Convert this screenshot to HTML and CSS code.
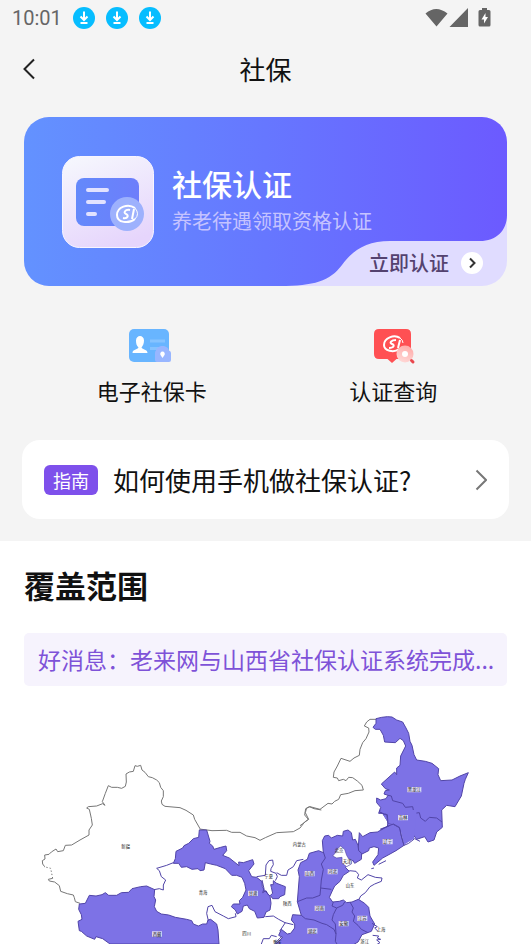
FILE: index.html
```html
<!DOCTYPE html>
<html lang="zh-CN">
<head>
    <meta charset="UTF-8">
    <meta name="viewport" content="width=device-width, initial-scale=1.0">
    <title>社保</title>
    <link rel="stylesheet" href="styles.css">
</head>
<body>
    <div class="status-bar">
        <span class="time">10:01</span>
        <svg class="download" viewBox="0 0 22 22"><circle cx="11" cy="11" r="11"/><path d="M11 4.5v8M7.5 9.5l3.500 3.500 3.500-3.500M7.500 16h7"/></svg>
        <svg class="download" viewBox="0 0 22 22"><circle cx="11" cy="11" r="11"/><path d="M11 4.5v8M7.5 9.5l3.500 3.500 3.500-3.500M7.500 16h7"/></svg>
        <svg class="download" viewBox="0 0 22 22"><circle cx="11" cy="11" r="11"/><path d="M11 4.5v8M7.5 9.5l3.500 3.500 3.500-3.500M7.500 16h7"/></svg>
        <svg class="signals" viewBox="0 0 66 20" width="66" height="20">
            <path d="M0.500 5.500Q11 -3.500 22.500 5.500L11.500 18.500ZM43 0V19H24.500ZM54 2h3V0h5v2h2q1.500 0 1.500 1.500v13.500q0 1.500-1.500 1.500H55q-1.500 0-1.500-1.500V3.500Q53.500 2 55 2Z"/>
            <path class="bolt" d="M60.500 5l-4 6.500h2.500v4l4-6.500h-2.500z"/>
        </svg>
    </div>

    <header class="header">
        <button class="back" aria-label="返回">
            <svg viewBox="0 0 12 22" width="12" height="22"><path d="M11 1.500L1.500 11l9.500 9.500"/></svg>
        </button>
        <h1>社保</h1>
    </header>

    <main>
        <a class="card" href="#">
            <svg class="card-bg" viewBox="0 0 483 169" preserveAspectRatio="none">
                <defs>
                    <linearGradient id="cardFill">
                        <stop offset="0" stop-color="#6392ff"/>
                        <stop offset="0.5" stop-color="#6677ff"/>
                        <stop offset="1" stop-color="#6c5aff"/>
                    </linearGradient>
                </defs>
                <path fill="url(#cardFill)" d="M0 0H483V98C483 114 472 124 456 124H366C342 124 328 134 318 148C306 164 290 169 256 169H0Z"/>
            </svg>
            <svg class="card-icon" viewBox="0 0 92 92">
                <defs>
                    <linearGradient id="tile" x1="0.2" y1="0" x2="0.6" y2="1">
                        <stop offset="0" stop-color="#f5f6fd"/>
                        <stop offset="1" stop-color="#e6d5fc"/>
                    </linearGradient>
                    <linearGradient id="sheet" x1="0" x2="1">
                        <stop offset="0" stop-color="#6489fb"/>
                        <stop offset="1" stop-color="#6d7efb"/>
                    </linearGradient>
                </defs>
                <rect x="0.500" y="0.500" width="91" height="91" rx="17" fill="url(#tile)" stroke="#f8f5ff"/>
                <rect x="14" y="22" width="63" height="48" rx="8" fill="url(#sheet)"/>
                <path d="M26 34h19M26 46h16M26 58h7" stroke="#e2e2ff" stroke-width="4" stroke-linecap="round"/>
                <circle cx="65" cy="58" r="17" fill="#9db1fd"/>
                <g class="logo" transform="translate(65 58)">
                    <path d="M8 -6C1 -11 -10 -7 -10 1C-10 9 2 10 8 5"/>
                    <path d="M3 -4C-2 -5 -4 -1 -1 0C2 1 1 5 -4 4M7 -5L5 5"/>
                    <path class="thin" d="M8 -6Q13 0 8 5"/>
                </g>
            </svg>
            <span class="card-text">
                <strong>社保认证</strong>
                <small>养老待遇领取资格认证</small>
            </span>
            <span class="card-action">立即认证
                <svg viewBox="0 0 22 22" width="22" height="22"><circle cx="11" cy="11" r="11"/><path d="M9 6.500l4.500 4.500L9 15.500"/></svg>
            </span>
        </a>

        <nav class="shortcuts">
            <a href="#">
                <svg viewBox="2 0 60 50" width="60" height="50">
                    <rect x="9" y="9" width="40" height="33" rx="5" fill="#68b5ff"/>
                    <path d="M30 21h15M30 28.500h9" stroke="#86c3ff" stroke-width="3"/>
                    <path fill="#fff" d="M12.500 33c0-4 5-3 6-5.500-2-2-2.500-4-2.500-7 0-6 8-6 8 0 0 3-1 5-2.500 7 1 2.500 6 1.500 6 5.500z"/>
                    <path fill="#98b6ff" d="M36 30.500C37 24.500 48 24.500 49 30.500Q51 31 51 33V40Q51 42 49 42H37Q35 42 35 40V33Q35 31 36 30.500Z"/>
                    <path fill="#fff" d="M42.500 38l-2-3a2.300 2.300 0 1 1 4 0z"/>
                </svg>
                电子社保卡
            </a>
            <a href="#">
                <svg viewBox="-2 0 60 50" width="60" height="50">
                    <defs>
                        <linearGradient id="lens" x1="0.7" y1="0" x2="0.3" y2="1">
                            <stop offset="0" stop-color="#ffaaa8"/>
                            <stop offset="1" stop-color="#ffd9d7"/>
                        </linearGradient>
                    </defs>
                    <path fill="#ff5053" d="M14 9H41Q46 9 46 14V34Q46 39 41 39H31.500L27 43L22.500 39H14Q9 39 9 34V14Q9 9 14 9Z"/>
                    <g class="logo" transform="translate(28 24)">
                        <path d="M7 -6C1 -10 -9 -6 -9 1C-9 7 1 9 6 5"/>
                        <path d="M3 -4C-2 -4 -4 -1 -1 0C2 1 1 4 -4 4M7 -4L5 4"/>
                        <path class="thin" d="M7 -6Q10 -4 10 -1"/>
                    </g>
                    <circle cx="40" cy="34" r="8.500" fill="url(#lens)"/>
                    <circle cx="40" cy="34" r="3" fill="#fff"/>
                    <path d="M46.500 40.500l1.500 1.500" stroke="#e9474d" stroke-width="3" stroke-linecap="round"/>
                </svg>
                认证查询
            </a>
        </nav>

        <a class="guide" href="#">
            <span class="tag">指南</span>
            <span class="guide-title">如何使用手机做社保认证?</span>
            <svg viewBox="0 0 12 22" width="12" height="22"><path d="M1.500 1.500L11 11l-9.500 9.500"/></svg>
        </a>
    </main>

    <section class="coverage">
        <h2>覆盖范围</h2>
        <p class="news">好消息：老来网与山西省社保认证系统完成...</p>

        <svg class="map" viewBox="12 24 1449 708">
            <!-- west -->
            <path class="border" d="M180 610L166 605L163 593L160 585L142 581L122 574L118 557L104 546L88 543L85 538L98 535"/>
            <path class="border dotted" d="M98 535L92 505L72 500"/>
            <path class="border" d="M74 500L68 492L67 482L75 477L74 465L87 463L94 456L108 447L113 455L130 452L136 436L155 435L180 420L207 405L207 390L217 375L214 355L208 328L200 324L205 320L230 318L248 311L255 316L247 305L256 280L265 257L275 262L292 262L305 265L316 259L319 246L318 222L328 216L340 214L345 197L352 199L362 196L366 210L375 217L385 230L397 233L410 240L418 248L422 262L430 272L430 290L424 303L426 313L435 319L480 323L498 331L520 345L524 358L540 386"/>
            <path class="area" d="M178 612L196 610L208 586L228 588L246 584L256 578L266 586L290 586L304 578L326 577L336 566L362 560L380 558L404 569L402 590L407 600L403 620L410 634L424 642L446 645L466 652L500 658L515 662L520 672L535 678L548 672L560 672L564 660L572 658L590 672L594 690L597 732H270L248 716L228 710L224 718L200 708L184 694L178 692L174 664L186 658L184 644L176 628Z"/>
            <path class="line" d="M402 569L418 566L430 570L430 555L437 540L424 530L418 512L410 505L440 496L460 488"/>

            <g transform="translate(420 240)">
                <path class="border" d="M118 147L156 152L200 151L215 157L240 157L260 168L285 173L300 181L316 173L350 158L400 155L420 144L434 126L446 118L436 98L440 84L448 80L462 86L484 90"/>
                <path class="area" d="M40 250L46 236L48 214L68 204L72 197L86 190L100 176L116 172L118 150L140 150L150 184L148 190L158 198L162 208L182 202L198 198L200 212L188 226L208 234L237 257L236 246L250 248L278 239L282 252L266 272L275 290L290 292L306 305L307 320L314 332L330 348L333 370L330 390L318 396L312 412L292 414L284 394L268 386L262 375L250 378L246 394L232 402L226 390L214 380L220 372L240 372L238 362L248 352L258 330L254 310L246 292L230 286L215 286L196 266L170 256L152 252L136 248L132 270L120 272L114 266L96 268L80 260L64 262L56 250Z"/>
                <path class="area" d="M340 302L350 310L376 320L374 344L360 350L356 356L338 356L331 346L338 340L334 322L332 314L340 314Z"/>
                <path class="line" d="M290 290L316 286L318 255L327 242L338 240L340 254L333 266L332 274L348 280L352 290L346 302M306 300L312 326L308 338L318 332L326 346M350 278L364 286L380 286L384 270L400 260L410 242L430 238"/>
                <path class="line" d="M316 410L340 408L356 418L375 428L400 434M376 428L360 452L370 466L358 476L344 492M350 470L334 466L328 476L310 476L304 492M145 422L140 400L144 380L156 376L165 395L190 408L205 416L228 410L226 400"/>
            </g>

            <g transform="translate(840 0)">
                <path class="border" d="M228 58L210 58L200 66L193 78L206 84L207 96L198 116L188 128L180 148L178 166L162 174L150 184L138 180L123 175L112 198L102 216L100 232L112 234L116 242L130 238L138 242L146 232L158 233L172 243L186 256L190 270L165 272L145 280L122 284L116 298L104 304L96 312L84 310L60 328L30 320L17 326L14 345L25 358L10 370L0 377"/>
                <path class="area" d="M228 56L245 52L262 50L276 51L290 60L308 66L318 84L326 100L330 124L336 136L342 164L350 180L376 184L396 190L416 206L414 224L422 242L456 240L480 228L505 218L496 238L492 250L484 288L465 320L440 316L425 330L427 382L410 396L402 420L384 426L374 410L350 418L330 392H252L244 388L262 380L264 366L248 340L236 340L242 322L230 308L230 294L242 300L258 296L264 286L252 282L256 272L268 270L256 266L244 252L284 216L290 224L290 204L300 196L302 168L317 138L310 122L300 115L286 128L254 126L250 106L240 88L226 88L219 82L228 70Z"/>
                <path class="line" d="M264 286L274 288L278 302L308 310L316 322L338 320L342 340L358 338L362 354L376 364L388 352L410 354L426 366"/>
            </g>

            <g transform="translate(810 330)">
                <!-- north east coast -->
                <path class="area" d="M270 0L268 6L282 12L290 12L294 40L308 42L330 54L334 78L342 106L318 122L300 132L278 144L252 166L248 156L264 134L266 114L252 110L238 114L236 122L212 134L204 124L208 68L218 80L240 68L262 66L284 54L300 46"/>
                <path d="M272 0H380L372 86L342 104L330 54L308 42L294 40L290 12Z" fill="#7d72e6"/>
                <path class="line" d="M270 58L300 46L310 42L328 52L334 78L342 106L356 100L374 86L390 94M270 6L284 14L292 14L294 40"/>
                <path class="line" d="M244 176L252 174M266 163L288 152"/>
                <!-- centre -->
                <path class="area" d="M97 92L104 78L116 76L124 84L142 76L158 78L160 64L174 60L184 68L188 90L196 88L204 106L206 122L215 130L214 148L194 160L188 150L178 162L166 172L178 184L160 196L150 214L134 228L128 240L118 262L128 276L148 274L160 270L170 278L186 276L205 268L224 280L236 292L240 318L254 342L244 364L216 374L204 396L190 404H-44L-22 382L-34 376L-26 358L-8 372L2 370L14 354L14 342L4 330L8 314L34 316L22 275L28 200L24 180L32 158L52 148L58 130L86 122L100 128Z"/>
                <path class="hole" d="M128 138L138 126L140 118L152 108L164 118L170 136L176 146L186 150L184 162L170 170L156 160L156 142L140 144Z"/>
                <path class="line" d="M100 126L106 144L94 162L100 178L94 210L92 234L124 238M92 234L90 256L68 264L50 264L22 275M34 316L46 326L72 330L96 340L110 344L132 358L138 372M130 276L126 288L140 294L130 314L126 330L136 342L138 372L136 394L142 404M140 294L158 286L164 276M180 276L190 294L186 306L194 318L190 334L204 346L214 358L234 368"/>
                <path class="line" d="M178 182L198 184L206 194L202 204L214 210L234 194L256 202L276 204L274 214L254 222L240 230L226 248L212 258L206 270"/>
                <path class="line" d="M246 340L262 350L254 354L264 364M248 376L266 378L262 384L272 388L260 390L270 398L262 402"/>
            </g>

            <g class="labels">
                <text x="317" y="445">新疆</text>
                <text x="549" y="582">青海</text>
                <text x="838" y="438">内蒙古</text>
                <text x="746" y="534">宁夏</text>
                <text x="802" y="616">陕西</text>
                <text x="680" y="706">四川</text>
                <text x="772" y="731">重庆</text>
                <text x="990" y="562">山东</text>
                <text x="957" y="456">北京</text>
                <text x="981" y="490">天津</text>
                <text x="1083" y="692">上海</text>
                <text x="1034" y="730">浙江</text>
            </g>
            <g class="labels boxed">
                <path d="M396 694h30v16h-30zM684 572h30v16h-30zM1162 261h42v16h-42zM1134 345h30v16h-30zM1088 417h30v16h-30zM854 513h30v16h-30zM923 507h30v16h-30zM884 617h30v16h-30zM862 685h30v16h-30zM956 663h30v16h-30zM1012 647h30v16h-30z"/>
                <text x="411" y="707">西藏</text>
                <text x="699" y="585">甘肃</text>
                <text x="1183" y="274">黑龙江</text>
                <text x="1149" y="358">吉林</text>
                <text x="1103" y="430">辽宁</text>
                <text x="869" y="526">山西</text>
                <text x="938" y="520">河北</text>
                <text x="899" y="630">河南</text>
                <text x="877" y="698">湖北</text>
                <text x="971" y="676">安徽</text>
                <text x="1027" y="660">江苏</text>
            </g>
        </svg>
    </section>
</body>
</html>
```
FILE: styles.css
```css
* {
    box-sizing: border-box;
}
body {
    font-family: "Noto Sans CJK SC", sans-serif;
    background-color: #f4f4f4;
    color: #111;
    margin: 0;
}
a {
    color: inherit;
    text-decoration: none;
}
svg {
    display: block;
    fill: none;
}
.status-bar {
    display: flex;
    align-items: center;
    gap: 11px;
    height: 36px;
    padding: 0 40px 0 12px;
}
.time {
    font-family: Roboto, sans-serif;
    font-size: 20px;
    color: #666;
}
.download {
    width: 22px;
    height: 22px;
}
.download circle {
    fill: #06bdff;
}
.download path {
    stroke: #fff;
    stroke-width: 2;
}
.signals {
    margin-left: auto;
    fill: #656565;
}
.signals .bolt {
    fill: #fff;
}
.header {
    display: grid;
    grid-template-columns: 36px 1fr 36px;
    align-items: center;
    height: 65px;
    padding: 0 12px;
}
.header h1 {
    margin: 0;
    text-align: center;
    font-size: 26px;
    font-weight: 400;
    line-height: 36px;
}
.back {
    padding: 0 11px;
    background: none;
    border: none;
    cursor: pointer;
}
.back path {
    stroke: #222;
    stroke-width: 2;
}
main {
    padding: 16px 22px 22px;
}
.card {
    position: relative;
    display: flex;
    align-items: center;
    gap: 18px;
    height: 169px;
    margin: 0 2px;
    padding: 0 38px;
    background: #e0dcff;
    border-radius: 25px;
    overflow: hidden;
}
.card-bg {
    position: absolute;
    inset: 0;
    width: 100%;
    height: 100%;
}
.card-icon {
    position: relative;
    width: 92px;
    height: 92px;
}
.logo path {
    stroke: #fff;
    stroke-width: 2;
}
.logo .thin {
    stroke-width: 1;
}
.card-text {
    position: relative;
    display: flex;
    flex-direction: column;
    color: #fff;
}
.card-text strong {
    font-size: 30px;
    font-weight: 500;
    line-height: 38px;
}
.card-text small {
    font-size: 20px;
    line-height: 38px;
    color: #c5c3ff;
}
.card-action {
    position: absolute;
    right: 24px;
    bottom: 8px;
    display: flex;
    align-items: center;
    gap: 12px;
    font-size: 20px;
    font-weight: 500;
    line-height: 30px;
    color: #54426f;
}
.card-action circle {
    fill: #fff;
}
.card-action path {
    stroke: #333;
    stroke-width: 2;
}
.shortcuts {
    display: grid;
    grid-template-columns: 1fr 1fr;
    padding: 34px 2px;
}
.shortcuts a {
    display: flex;
    flex-direction: column;
    align-items: center;
    gap: 4px;
    padding-left: 14px;
    font-size: 22px;
    line-height: 32px;
}
.guide {
    display: flex;
    align-items: center;
    gap: 15px;
    height: 79px;
    padding: 0 22px;
    background: #fff;
    border-radius: 18px;
}
.tag {
    padding: 0 9px;
    background: #7e50eb;
    border-radius: 6px;
    color: #fff;
    font-size: 18px;
    line-height: 30px;
}
.guide-title {
    flex: 1;
    font-size: 26px;
}
.guide path {
    stroke: #777;
    stroke-width: 2;
}
.coverage {
    padding: 22px 24px 0;
    background: #fff;
}
.coverage h2 {
    margin: 0 0 26px;
    font-size: 31px;
    font-weight: 700;
    line-height: 44px;
}
.news {
    margin: 0 0 22px;
    padding: 0 4px 0 14px;
    background: #f6f3fd;
    border-radius: 5px;
    color: #7e52d8;
    font-size: 23px;
    line-height: 53px;
    white-space: nowrap;
    overflow: hidden;
    text-overflow: ellipsis;
}
.map {
    width: 100%;
}
.border {
    stroke: #777;
    stroke-width: 3;
}
.dotted {
    stroke-dasharray: 4 6;
}
.area {
    fill: #7d72e6;
    stroke: #5145a8;
    stroke-width: 3;
}
.line {
    stroke: #5145a8;
    stroke-width: 3;
}
.hole {
    fill: #fff;
    stroke: #5145a8;
    stroke-width: 2;
}
.labels {
    fill: #222;
    font-size: 13px;
    text-anchor: middle;
}
.boxed path {
    fill: #dcd8f5;
}
```
